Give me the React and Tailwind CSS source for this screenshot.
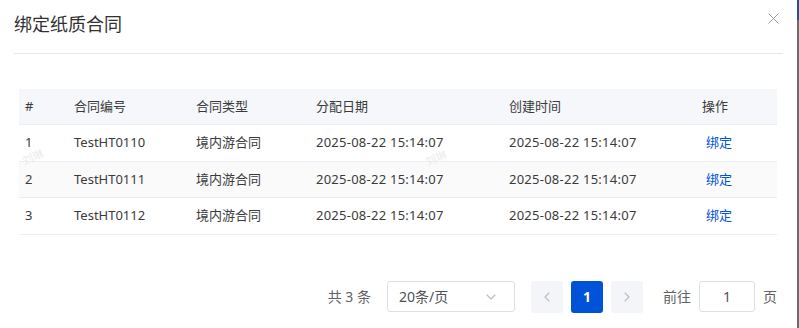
const rows = [
  { no: 1, code: 'TestHT0110', type: '境内游合同', assigned: '2025-08-22 15:14:07', created: '2025-08-22 15:14:07' },
  { no: 2, code: 'TestHT0111', type: '境内游合同', assigned: '2025-08-22 15:14:07', created: '2025-08-22 15:14:07' },
  { no: 3, code: 'TestHT0112', type: '境内游合同', assigned: '2025-08-22 15:14:07', created: '2025-08-22 15:14:07' },
]

const cols = 'grid grid-cols-[49px_122px_120px_193px_193px_81px]'

function Chevron({ dir }) {
  const d = dir === 'left' ? 'M9 3L5 7l4 4' : dir === 'right' ? 'M5 3l4 4-4 4' : 'M3 5l4 4 4-4'
  return (
    <svg width="14" height="14" viewBox="0 0 14 14" fill="none">
      <path d={d} stroke="#b8bcc4" strokeWidth="1.1" strokeLinecap="round" strokeLinejoin="round" />
    </svg>
  )
}

export default function App() {
  return (
    <div
      className="relative w-[799px] h-[328px] bg-white overflow-hidden flex"
      style={{ fontFamily: '"Noto Sans", "Noto Sans CJK SC", sans-serif' }}
    >
      <div className="flex-1 flex flex-col">
        {/* Header */}
        <div className="mx-[14px] h-[54px] border-b border-[#e4e7ed] flex items-start pt-[11px]">
          <h2 className="text-[18px] leading-[26px] text-[#303133]">绑定纸质合同</h2>
        </div>
        <button className="absolute left-[768px] top-[13px] w-[11px] h-[11px]">
          <svg width="11" height="11" viewBox="0 0 11 11">
            <path d="M0.5 0.5l10 10M10.5 0.5l-10 10" stroke="#9a9ca3" strokeWidth="1" />
          </svg>
        </button>

        {/* Table */}
        <div className="mt-[35px] ml-[19px] w-[758px] text-[13px] text-[#3a3a3a]">
          <div className={`${cols} h-[36px] bg-[#f5f7fa] border-b border-[#ebeef5] items-center`}>
            {['#', '合同编号', '合同类型', '分配日期', '创建时间', '操作'].map((h) => (
              <div key={h} className="pl-[6px]">{h}</div>
            ))}
          </div>
          {rows.map((r, i) => (
            <div
              key={r.no}
              className={`${cols} h-[36.5px] border-b border-[#ebeef5] items-center ${i === 1 ? 'bg-[#fafafa]' : ''}`}
            >
              <div className="pl-[6px]">{r.no}</div>
              <div className="pl-[6px]">{r.code}</div>
              <div className="pl-[6px]">{r.type}</div>
              <div className="pl-[6px] tracking-[0.25px]">{r.assigned}</div>
              <div className="pl-[6px] tracking-[0.25px]">{r.created}</div>
              <div className="pl-[10px] text-[#0052d9]">绑定</div>
            </div>
          ))}
        </div>

        {/* Watermarks */}
        <span className="absolute left-[22px] top-[151px] text-[11px] leading-[12px] text-[#ebebeb] -rotate-[25deg] select-none">刘琳</span>
        <span className="absolute left-[425px] top-[152px] text-[11px] leading-[12px] text-[#ebebeb] -rotate-[25deg] select-none">刘琳</span>

        {/* Pagination */}
        <div className="mt-[46px] flex items-center justify-end pr-[20px] text-[14px] text-[#606266]">
          <span className="mr-[16px]">共 3 条</span>
          <div className="w-[128px] h-[31px] border border-[#dcdfe6] rounded-[3px] flex items-center justify-between pl-[11px] pr-[16px] text-[#505256]">
            <span>20条/页</span>
            <Chevron dir="down" />
          </div>
          <div className="ml-[16px] w-[32px] h-[32px] rounded-[3px] bg-[#f4f5f8] flex items-center justify-center">
            <Chevron dir="left" />
          </div>
          <div className="ml-[8px] w-[32px] h-[32px] rounded-[3px] bg-[#0052d9] flex items-center justify-center text-white font-bold">
            1
          </div>
          <div className="ml-[8px] w-[32px] h-[32px] rounded-[3px] bg-[#f4f5f8] flex items-center justify-center">
            <Chevron dir="right" />
          </div>
          <span className="ml-[20px]">前往</span>
          <div className="ml-[8px] w-[56px] h-[31px] border border-[#dcdfe6] rounded-[3px] flex items-center justify-center text-[#505256]">
            1
          </div>
          <span className="ml-[8px]">页</span>
        </div>
      </div>

      {/* Edge of underlying window */}
      <div className="w-[2px] h-full bg-[#6b6b6b] flex flex-col">
        <div className="h-[20px] bg-[#2f4d8c]" />
      </div>
    </div>
  )
}
